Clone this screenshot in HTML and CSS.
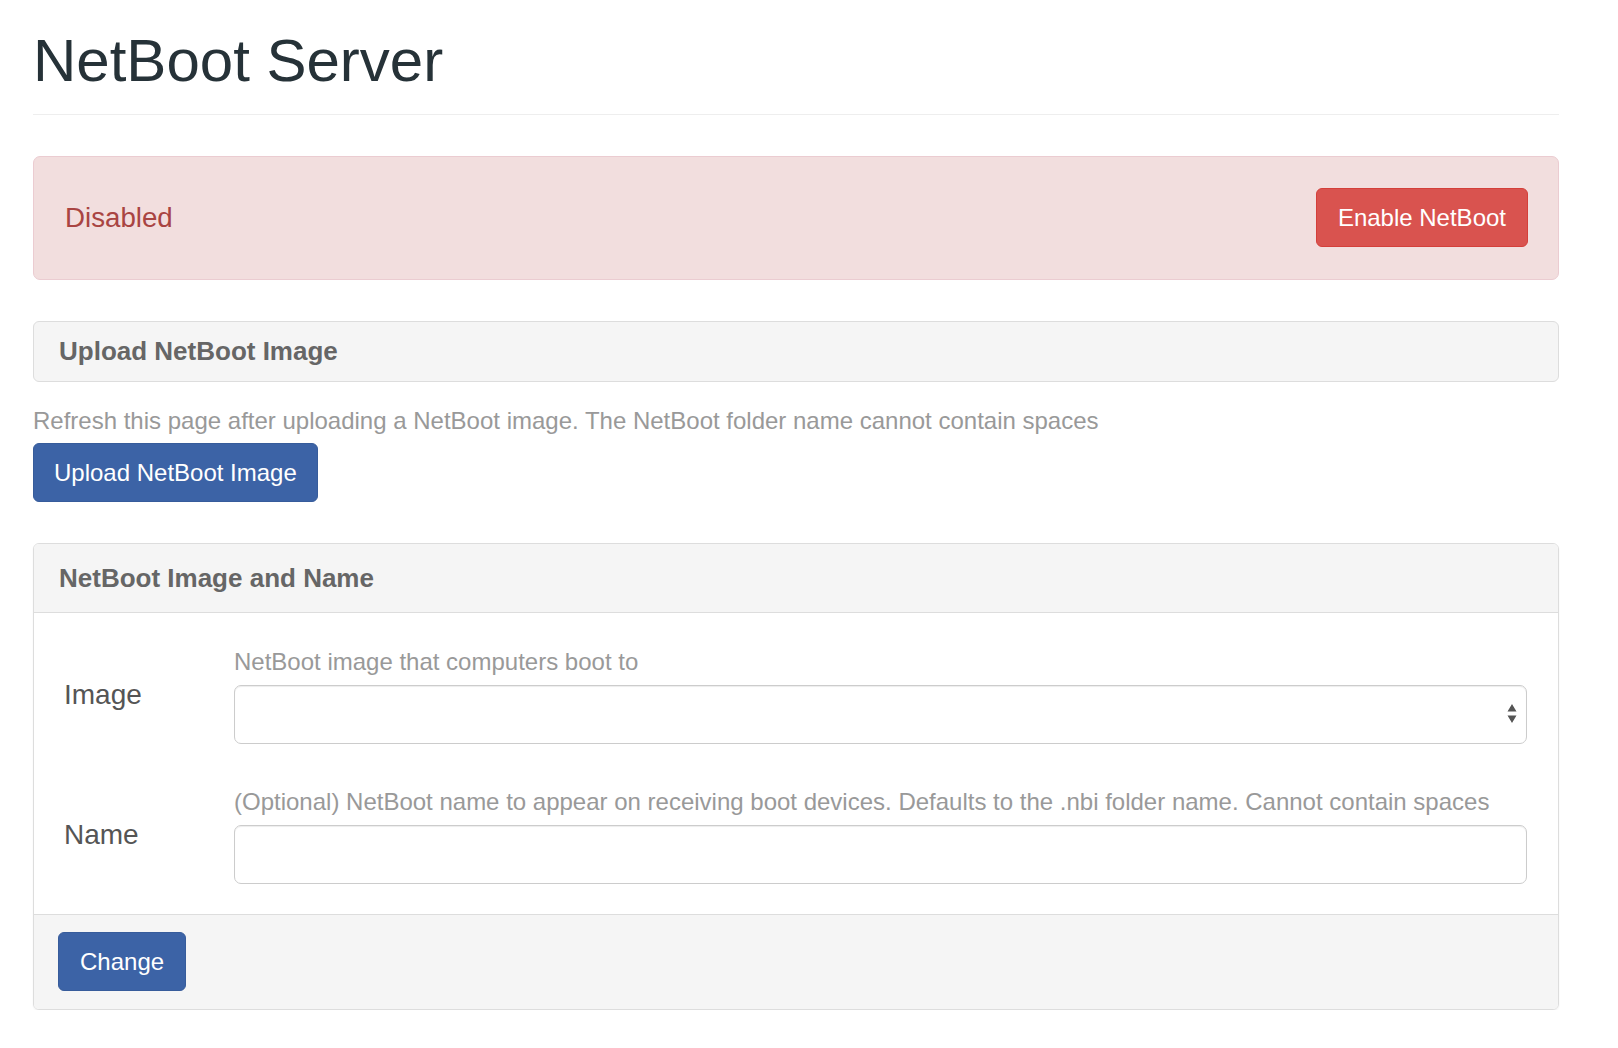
FILE: index.html
```html
<!DOCTYPE html>
<html lang="en">
<head>
<meta charset="utf-8">
<title>NetBoot Server</title>
<link rel="stylesheet" href="styles.css">
</head>
<body>
<div class="page">
  <div class="page-header">
    <h1 class="title">NetBoot Server</h1>
  </div>

  <div class="alert">
    <span class="alert-text">Disabled</span>
    <button class="btn btn-danger" type="button">Enable NetBoot</button>
  </div>

  <div class="bar-panel">Upload NetBoot Image</div>
  <p class="help upload-help">Refresh this page after uploading a NetBoot image. The NetBoot folder name cannot contain spaces</p>
  <button class="btn btn-primary btn-upload" type="button">Upload NetBoot Image</button>

  <div class="panel">
    <div class="panel-heading">NetBoot Image and Name</div>
    <div class="panel-body">
      <div class="form-row">
        <label class="control-label">Image</label>
        <div class="control">
          <div class="help">NetBoot image that computers boot to</div>
          <div class="select-wrap">
            <select class="form-control"><option></option></select>
            <svg class="select-arrows" width="10" height="20" viewBox="0 0 10 20"><path d="M5 0 L9.5 7.5 L0.5 7.5 Z M0.5 11.5 L9.5 11.5 L5 19 Z" fill="#555"/></svg>
          </div>
        </div>
      </div>
      <div class="form-row">
        <label class="control-label">Name</label>
        <div class="control">
          <div class="help">(Optional) NetBoot name to appear on receiving boot devices. Defaults to the .nbi folder name. Cannot contain spaces</div>
          <input class="form-control" type="text">
        </div>
      </div>
    </div>
    <div class="panel-footer">
      <button class="btn btn-primary" type="button">Change</button>
    </div>
  </div>
</div>
</body>
</html>
```

FILE: styles.css
```css
* { box-sizing: border-box; }

html, body {
  margin: 0;
  background: #fff;
}

body {
  font-family: "Liberation Sans", Arial, Helvetica, sans-serif;
  font-size: 24px;
  color: #333;
}

.page {
  padding: 0 59px 0 33px;
  display: flex;
  flex-direction: column;
  align-items: stretch;
}

.page-header {
  padding: 28px 0 20px;
  border-bottom: 1px solid #eee;
}

.title {
  margin: 0;
  font-size: 60px;
  line-height: 66px;
  font-weight: 400;
  color: #263238;
}

.alert {
  margin-top: 41px;
  display: flex;
  align-items: center;
  justify-content: space-between;
  padding: 31px 30px 32px 31px;
  background: #f2dede;
  border: 1px solid #ebccd1;
  border-radius: 7px;
}

.alert-text {
  color: #a94442;
  font-size: 27.7px;
  line-height: 34px;
}

.btn {
  font-family: inherit;
  font-size: 24px;
  line-height: 35px;
  padding: 11px 21px;
  border: 1px solid transparent;
  border-radius: 6px;
  color: #fff;
  cursor: pointer;
  align-self: flex-start;
}

.btn-upload {
  padding: 11px 20px;
}

.btn-danger {
  background: #d9534f;
  border-color: #d43f3a;
}

.btn-primary {
  background: #3c63a6;
  border-color: #375c9b;
}

.bar-panel {
  margin-top: 41px;
  height: 61px;
  display: flex;
  align-items: center;
  padding: 0 25px;
  background: #f5f5f5;
  border: 1px solid #ddd;
  border-radius: 6px;
  font-weight: 700;
  font-size: 26px;
  color: #666;
}

.help {
  color: #999;
  font-size: 24px;
  line-height: 34px;
}

.upload-help {
  margin: 22px 0 5px;
}

.panel {
  margin-top: 41px;
  border: 1px solid #ddd;
  border-radius: 6px;
  box-shadow: 0 1px 2px rgba(0, 0, 0, 0.06);
  overflow: hidden;
}

.panel-heading {
  padding: 17px 25px 17px;
  background: #f5f5f5;
  border-bottom: 1px solid #ddd;
  font-weight: 700;
  font-size: 26px;
  line-height: 34px;
  color: #666;
}

.panel-body {
  padding: 32px 31px 30px 30px;
  display: flex;
  flex-direction: column;
  gap: 41px;
}

.form-row {
  display: grid;
  grid-template-columns: 170px 1fr;
  align-items: center;
}

.control-label {
  font-size: 28px;
  color: #555;
}

.control {
  display: flex;
  flex-direction: column;
  gap: 6px;
}

.select-wrap {
  position: relative;
}

.form-control {
  display: block;
  width: 100%;
  height: 59px;
  margin: 0;
  padding: 0 20px;
  font-family: inherit;
  font-size: 24px;
  color: #555;
  background: #fff;
  border: 1px solid #ccc;
  border-radius: 7px;
  box-shadow: inset 0 1px 1px rgba(0, 0, 0, 0.075);
  appearance: none;
  -webkit-appearance: none;
  outline: none;
}

.select-arrows {
  position: absolute;
  right: 10px;
  top: 19px;
}

.panel-footer {
  padding: 17px 25px 18px 24px;
  background: #f5f5f5;
  border-top: 1px solid #ddd;
  display: flex;
}
```
